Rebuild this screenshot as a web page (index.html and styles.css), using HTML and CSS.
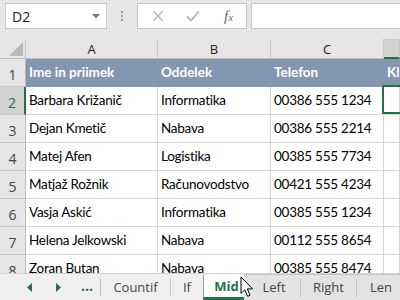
FILE: index.html
```html
<!DOCTYPE html>
<html>
<head>
<meta charset="utf-8">
<link rel="stylesheet" href="styles.css">
</head>
<body>
<div class="app">
  <div class="fbar">
    <div class="namebox">
      <span class="ref">D2</span>
      <svg class="dd" width="8" height="5" viewBox="0 0 8 5"><path d="M0 0H8L4 4.5Z" fill="#7a7a7a"/></svg>
    </div>
    <div class="grip"><i></i><i></i><i></i></div>
    <div class="fbtns">
      <svg class="ico" width="12" height="12" viewBox="0 0 12 12"><path d="M1 1L11 11M11 1L1 11" stroke="#b4b4b4" stroke-width="1.3" fill="none"/></svg>
      <svg class="ico" width="14" height="12" viewBox="0 0 14 12"><path d="M1 6.5L5 10.5L13 1.5" stroke="#b4b4b4" stroke-width="1.8" fill="none"/></svg>
      <span class="fx">f<small>x</small></span>
    </div>
    <div class="finput"></div>
  </div>

  <div class="sheet">
    <div class="grid">
      <div class="corner"><svg width="14" height="14" viewBox="0 0 14 14"><path d="M14 0V14H0Z" fill="#b8b8b8"/></svg></div>
      <div class="ch">A</div>
      <div class="ch">B</div>
      <div class="ch">C</div>
      <div class="ch sel"></div>

      <div class="rh">1</div>
      <div class="c hd">Ime in priimek</div>
      <div class="c hd">Oddelek</div>
      <div class="c hd">Telefon</div>
      <div class="c hd">Klient</div>

      <div class="rh sel">2</div>
      <div class="c">Barbara Križanič</div>
      <div class="c">Informatika</div>
      <div class="c">00386 555 1234</div>
      <div class="c active"></div>

      <div class="rh">3</div>
      <div class="c">Dejan Kmetič</div>
      <div class="c">Nabava</div>
      <div class="c">00386 555 2214</div>
      <div class="c"></div>

      <div class="rh">4</div>
      <div class="c">Matej Afen</div>
      <div class="c">Logistika</div>
      <div class="c">00385 555 7734</div>
      <div class="c"></div>

      <div class="rh">5</div>
      <div class="c">Matjaž Rožnik</div>
      <div class="c">Računovodstvo</div>
      <div class="c">00421 555 4234</div>
      <div class="c"></div>

      <div class="rh">6</div>
      <div class="c">Vasja Askić</div>
      <div class="c">Informatika</div>
      <div class="c">00385 555 1234</div>
      <div class="c"></div>

      <div class="rh">7</div>
      <div class="c">Helena Jelkowski</div>
      <div class="c">Nabava</div>
      <div class="c">00112 555 8654</div>
      <div class="c"></div>

      <div class="rh">8</div>
      <div class="c">Zoran Butan</div>
      <div class="c">Nabava</div>
      <div class="c">00385 555 8474</div>
      <div class="c"></div>
    </div>
  </div>

  <div class="tabs">
    <div class="nav">
      <svg class="arr l" width="5" height="9" viewBox="0 0 5 9"><path d="M5 0V9L0 4.5Z" fill="#217346"/></svg>
      <svg class="arr r" width="5" height="9" viewBox="0 0 5 9"><path d="M0 0V9L5 4.5Z" fill="#217346"/></svg>
      <span class="more">...</span>
    </div>
    <span class="sep"></span>
    <div class="tab countif">Countif</div>
    <span class="sep"></span>
    <div class="tab iff">If</div>
    <div class="tab cur">Mid</div>
    <div class="rest">
      <div class="tab left">Left</div>
      <span class="sep"></span>
      <div class="tab right">Right</div>
      <span class="sep"></span>
      <div class="tab len">Len</div>
    </div>
    <svg class="cursor" width="14" height="22" viewBox="0 0 14 22"><path d="M1 1V17.5L4.8 13.8L7.6 20.3L10 19.3L7.3 12.9H12.6Z" fill="#fff" stroke="#000" stroke-width="1" stroke-linejoin="round"/></svg>
  </div>
</div>
</body>
</html>
```

FILE: styles.css
```css
* { box-sizing: border-box; }
html, body { margin: 0; padding: 0; }
body {
  width: 400px;
  height: 300px;
  overflow: hidden;
  background: #e6e6e6;
  font-family: "Noto Sans", "Open Sans", sans-serif;
}
.app {
  display: flex;
  flex-direction: column;
  width: 400px;
  height: 300px;
}

/* formula bar */
.fbar {
  height: 39px;
  flex: none;
  display: flex;
  align-items: flex-start;
  padding: 3px 0 0 5px;
}
.namebox {
  width: 102px;
  height: 26px;
  background: #fff;
  border: 1px solid #c6c6c6;
  display: flex;
  align-items: center;
  justify-content: space-between;
  padding: 0 6px 0 6px;
}
.ref {
  font-size: 14px;
  color: #222;
  font-family: "Open Sans", sans-serif;
}
.dd { margin-top: 1px; }
.grip {
  width: 2px;
  margin: 8px 14px 0 14px;
  display: flex;
  flex-direction: column;
  gap: 2px;
}
.grip i {
  display: block;
  width: 2px;
  height: 2px;
  background: #a0a0a0;
}
.fbtns {
  width: 110px;
  height: 26px;
  background: #fff;
  border: 1px solid #c6c6c6;
  display: flex;
  align-items: center;
  padding-left: 14px;
}
.fbtns .ico:nth-child(2) { margin-left: 22px; }
.fx {
  margin-left: 24px;
  font-family: "Liberation Serif", serif;
  font-style: italic;
  font-size: 15px;
  color: #6a6a6a;
}
.fx small { font-size: 11px; }
.finput {
  flex: 1;
  height: 26px;
  margin-left: 4px;
  margin-right: -2px;
  background: #fff;
  border: 1px solid #c6c6c6;
}

/* sheet */
.sheet {
  flex: 1;
  overflow: hidden;
  background: #fff;
  border-bottom: 1px solid #d4d4d4;
}
.grid {
  display: grid;
  grid-template-columns: 26px 132px 113px 113px 1fr;
  grid-template-rows: 20px repeat(8, 28px);
}
.corner {
  background: #e6e6e6;
  border-right: 1px solid #c6c6c6;
  border-bottom: 1px solid #bdbdbd;
  display: flex;
  align-items: flex-end;
  justify-content: flex-end;
  padding: 0 2px 2px 0;
}
.ch {
  background: #e6e6e6;
  border-right: 1px solid #c6c6c6;
  border-bottom: 1px solid #bdbdbd;
  font-family: "Open Sans", sans-serif;
  font-size: 13px;
  color: #222;
  display: flex;
  align-items: center;
  justify-content: center;
}
.ch.sel {
  background: #d2d2d2;
  border-bottom: 2px solid #217346;
}
.rh {
  background: #e6e6e6;
  border-right: 1px solid #bdbdbd;
  border-bottom: 1px solid #c6c6c6;
  font-family: "Open Sans", sans-serif;
  font-size: 14px;
  color: #444;
  display: flex;
  align-items: flex-end;
  justify-content: center;
  padding-bottom: 2px;
}
.rh.sel {
  background: #d2d2d2;
  color: #217346;
  border-right: 2px solid #217346;
}
.c {
  border-right: 1px solid #d4d4d4;
  border-bottom: 1px solid #d4d4d4;
  font-family: "Lato", sans-serif;
  font-size: 13.5px;
  letter-spacing: -0.25px;
  color: #000;
  display: flex;
  align-items: flex-end;
  padding: 0 0 6px 3px;
  white-space: nowrap;
  overflow: hidden;
}
.c.hd {
  background: #8497b0;
  border-color: #8497b0;
  color: #fff;
  font-weight: bold;
  letter-spacing: 0;
}
.c.active {
  position: relative;
  overflow: visible;
}
.c.active::after {
  content: "";
  position: absolute;
  left: -2px;
  top: -2px;
  right: -4px;
  bottom: 0;
  border: 2px solid #217346;
}

/* tabs */
.tabs {
  height: 26px;
  flex: none;
  display: flex;
  align-items: stretch;
  background: #f0f0f0;
  position: relative;
  font-family: "Open Sans", sans-serif;
  font-size: 13px;
  color: #444;
}
.nav {
  width: 100px;
  display: flex;
  align-items: center;
  padding-left: 27px;
}
.arr.r { margin-left: 24px; }
.more {
  margin-left: 20px;
  color: #217346;
  font-weight: bold;
  font-size: 14px;
  margin-top: -4px;
}
.sep {
  width: 1px;
  height: 18px;
  align-self: center;
  background: #c6c6c6;
  flex: none;
}
.tab {
  display: flex;
  align-items: center;
  justify-content: center;
  padding-bottom: 1px;
}
.countif { width: 69px; }
.iff { width: 32px; }
.cur {
  width: 41px;
  background: #fff;
  border-left: 1px solid #9a9a9a;
  border-bottom: 3px solid #217346;
  color: #217346;
  font-weight: bold;
  padding-left: 5px;
  padding-bottom: 0;
  margin-top: 1px;
}
.rest {
  flex: 1;
  display: flex;
  align-items: stretch;
  background: #e3e3e3;
  border-top: 1px solid #c6c6c6;
  margin-right: -10px;
}
.left { width: 56px; padding-left: 4px; }
.right { width: 55px; }
.len { width: 48px; }
.cursor {
  position: absolute;
  left: 240px;
  top: 2px;
}
```
